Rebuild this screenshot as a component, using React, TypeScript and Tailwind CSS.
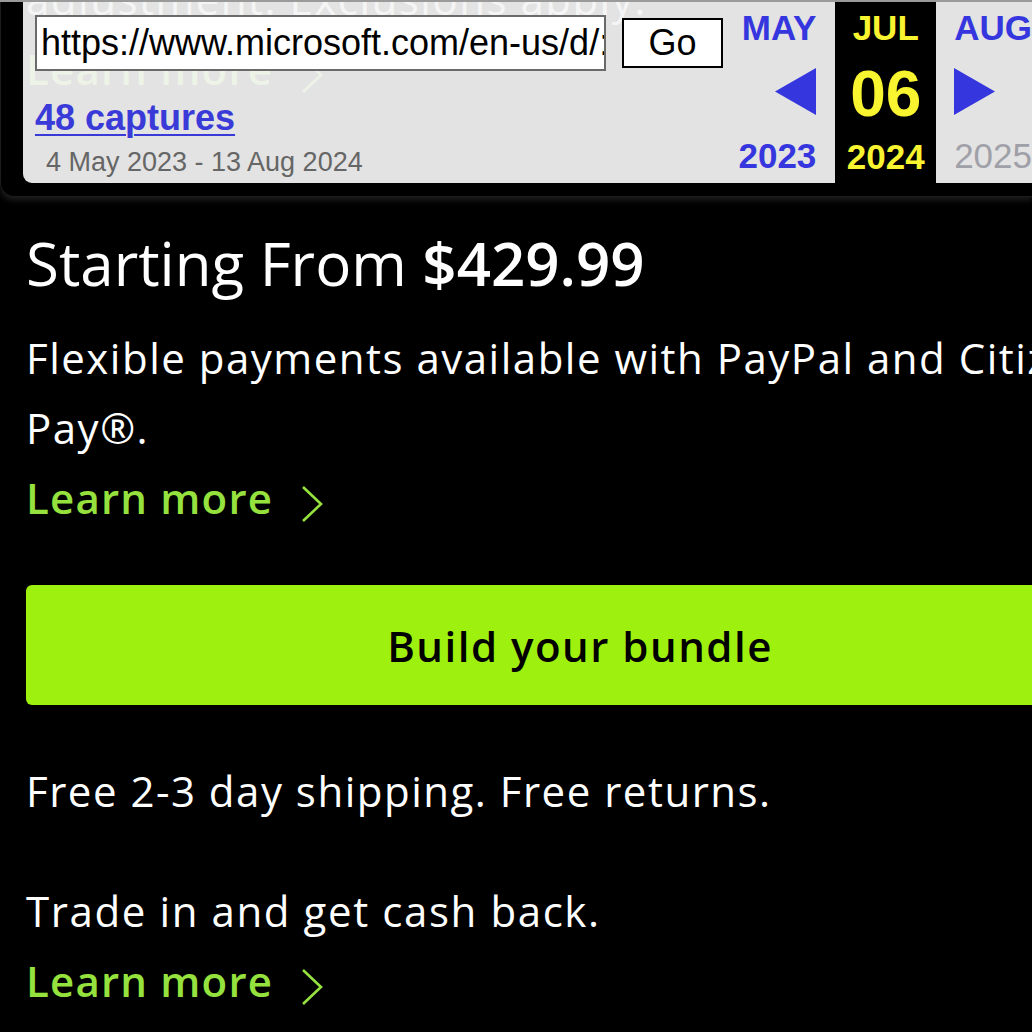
import React from "react";

const sans = { fontFamily: '"Open Sans", "Noto Sans", sans-serif' };
const arial = { fontFamily: '"Liberation Sans", Arial, sans-serif' };

const Chevron = () => (
  <svg width="24" height="38" viewBox="0 0 24 38" className="inline-block ml-[27px] align-[-9px]">
    <polyline points="3,2 21,19 3,36" fill="none" stroke="#95e23e" strokeWidth="2.6" />
  </svg>
);

const LearnMore = () => (
  <div className="text-[42px] leading-[70px] font-semibold tracking-[1.2px] text-[#95e23e] whitespace-nowrap">
    Learn more
    <Chevron />
  </div>
);

const Toolbar = () => {
  return (
    <div className="absolute top-0 left-0 w-[1032px] z-10" style={arial}>
      <div className="h-[2px] bg-[#9a9a9a]" />
      <div className="flex h-[181px]">
        <div className="w-[23px] bg-black border-l border-[#1c1c1c]" />
        {/* grey panel, see-through so the page shows a bit */}
        <div className="flex w-[814px] bg-[rgba(244,244,244,0.93)] rounded-bl-[9px]">
          <div className="flex flex-col pt-[13px] pl-[12px]">
            <div className="flex items-center gap-[16px]">
              <div className="w-[571px] h-[56px] bg-white border-2 border-[#6a6a6a] flex items-center pl-[4px] overflow-hidden whitespace-nowrap text-[36px] leading-none text-black">
                https://www.microsoft.com/en-us/d/:
              </div>
              <div className="w-[101px] h-[50px] bg-white border-2 border-black flex items-center justify-center text-[36px] leading-none text-black">
                Go
              </div>
            </div>
            <a className="mt-[29px] text-[36px] leading-[36px] font-bold text-[#3a3ad8] underline decoration-2 underline-offset-[4px] w-fit">
              48 captures
            </a>
            <div className="mt-[13px] pl-[11px] text-[27px] leading-[27px] text-[#666]">
              4 May 2023 - 13 Aug 2024
            </div>
          </div>
          <div className="flex-1 flex flex-col items-end pt-[8px] pr-[19px] text-[#3636de] font-bold">
            <div className="text-[35px] leading-[35px]">MAY</div>
            <svg width="41" height="47" viewBox="0 0 41 47" className="mt-[23px]">
              <polygon points="41,0 41,47 0,23.5" fill="#3636de" />
            </svg>
            <div className="mt-[23px] text-[35px] leading-[35px]">2023</div>
          </div>
        </div>
        <div className="w-[101px] bg-black flex flex-col items-center pt-[8px] text-[#f8f430] font-bold">
          <div className="text-[35px] leading-[35px]">JUL</div>
          <div className="mt-[17px] text-[64px] leading-[64px]">06</div>
          <div className="mt-[13px] text-[35px] leading-[35px]">2024</div>
        </div>
        <div className="flex-1 bg-[rgba(244,244,244,0.93)] flex flex-col items-start pt-[8px] pl-[18px] font-bold">
          <div className="text-[35px] leading-[35px] text-[#3636de]">AUG</div>
          <svg width="41" height="47" viewBox="0 0 41 47" className="mt-[23px]">
            <polygon points="0,0 0,47 41,23.5" fill="#3636de" />
          </svg>
          <div className="mt-[23px] text-[35px] leading-[35px] font-normal text-[#a0a0a8]">2025</div>
        </div>
      </div>
      <div className="h-[14px] bg-black rounded-bl-[18px] border-l border-b border-[#1c1c1c] shadow-[0_3px_6px_rgba(255,255,255,0.12)]" />
    </div>
  );
};

export default function App() {
  return (
    <div className="relative w-[1032px] h-[1032px] overflow-hidden bg-black">
      <Toolbar />
      <div className="w-[1160px] px-[26px] -mt-[36px] text-white" style={sans}>
        <div className="text-[42px] leading-[70px] tracking-[1.5px] whitespace-nowrap">adjustment. Exclusions apply.</div>
        <LearnMore />

        <h1 className="mt-[123px] text-[60px] leading-[73px] font-normal whitespace-nowrap">
          Starting From <span className="font-semibold">$429.99</span>
        </h1>
        <p className="mt-[23px] text-[42px] leading-[70px] tracking-[1.5px]">
          <span className="whitespace-nowrap">Flexible payments available with PayPal and Citizens</span>
          <br />
          Pay®.
        </p>
        <LearnMore />

        <button className="mt-[52px] w-full h-[120px] rounded-[6px] bg-[#9ef00e] text-black text-[42px] font-semibold tracking-[1.5px]">
          Build your bundle
        </button>

        <p className="mt-[51px] text-[42px] leading-[70px] tracking-[1.5px]">Free 2-3 day shipping. Free returns.</p>
        <p className="mt-[50px] text-[42px] leading-[70px] tracking-[1.6px]">Trade in and get cash back.</p>
        <LearnMore />
      </div>
    </div>
  );
}
